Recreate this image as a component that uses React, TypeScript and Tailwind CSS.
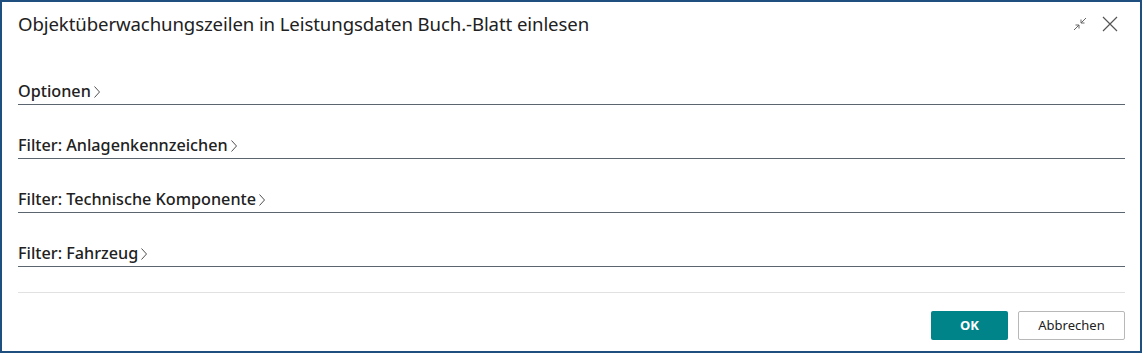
import React from "react";

const sections = [
  "Optionen",
  "Filter: Anlagenkennzeichen",
  "Filter: Technische Komponente",
  "Filter: Fahrzeug",
];

function Chevron() {
  return (
    <svg width="8" height="14" viewBox="0 0 8 14" className="ml-[2px] mt-[2px]">
      <path d="M1.5 1.5 L6.5 7 L1.5 12.5" fill="none" stroke="#505050" strokeWidth="1" />
    </svg>
  );
}

export default function App() {
  return (
    <div className="w-[1145px] h-[357px] bg-white" style={{ fontFamily: '"Noto Sans", "Open Sans", sans-serif' }}>
      <div className="w-[1142px] h-[353px] border-2 border-[#1f4f7f] flex flex-col">
        <div className="flex items-center justify-between pl-[16px] pr-[22px] pt-[10px] h-[34px]">
          <div className="text-[18.6px] text-[#212121] tracking-[-0.1px]">
            Objektüberwachungszeilen in Leistungsdaten Buch.-Blatt einlesen
          </div>
          <div className="flex items-center gap-[14px]">
            <svg width="16" height="16" viewBox="0 0 16 16">
              <path d="M2 14 L7 9 M3.5 9 L7 9 L7 12.5" fill="none" stroke="#666" strokeWidth="1" />
              <path d="M14 2 L9 7 M9 3.5 L9 7 L12.5 7" fill="none" stroke="#666" strokeWidth="1" />
            </svg>
            <svg width="16" height="16" viewBox="0 0 16 16">
              <path d="M1 1 L15 15 M15 1 L1 15" fill="none" stroke="#555" strokeWidth="1.2" />
            </svg>
          </div>
        </div>
        <div className="flex flex-col pl-[16px] pr-[15px] pt-[15px]">
          {sections.map((s) => (
            <div key={s} className="h-[54px] flex items-end border-b border-[#5b6570]">
              <div className="flex items-center pb-[2px] text-[16.2px] text-[#212121] font-medium leading-[22px]">
                {s}
                <Chevron />
              </div>
            </div>
          ))}
          <div className="h-[26px] border-b border-[#e1e1e1]" />
        </div>
        <div className="flex justify-end gap-[10px] pl-[16px] pr-[15px] pt-[18px]">
          <button className="w-[77px] h-[29px] bg-[#008489] text-white text-[13px] font-bold rounded-[2px]">
            OK
          </button>
          <button className="w-[107px] h-[29px] bg-white border border-[#b8b8b8] text-[#212121] text-[13px] rounded-[2px]">
            Abbrechen
          </button>
        </div>
      </div>
    </div>
  );
}
